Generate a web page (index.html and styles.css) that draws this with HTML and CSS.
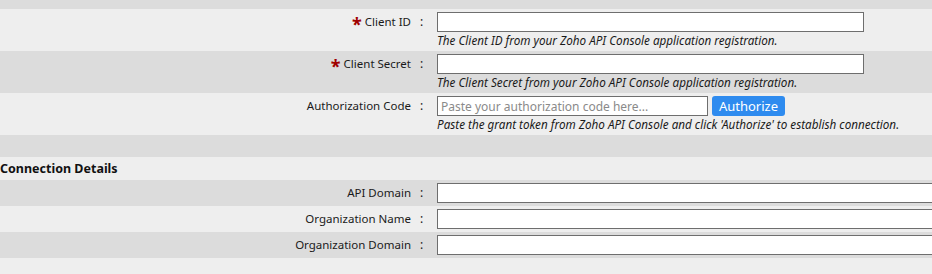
FILE: index.html
```html
<!DOCTYPE html>
<html lang="en">
<head>
    <meta charset="UTF-8">
    <meta name="viewport" content="width=device-width, initial-scale=1.0">
    <title>Zoho API Settings</title>
    <link rel="stylesheet" href="styles.css">
</head>
<body>

<div class="settings">
    <div class="row spacer-top"></div>

    <div class="row">
        <label class="label" for="clientId"><span class="req">*</span> Client ID</label>
        <span class="colon">:</span>
        <div class="field">
            <input type="text" class="input-field" id="clientId">
            <div class="help">The Client ID from your Zoho API Console application registration.</div>
        </div>
    </div>

    <div class="row">
        <label class="label" for="clientSecret"><span class="req">*</span> Client Secret</label>
        <span class="colon">:</span>
        <div class="field">
            <input type="text" class="input-field" id="clientSecret">
            <div class="help">The Client Secret from your Zoho API Console application registration.</div>
        </div>
    </div>

    <div class="row">
        <label class="label" for="authCode">Authorization Code</label>
        <span class="colon">:</span>
        <div class="field">
            <div class="auth-line">
                <input type="text" class="input-field auth-input" id="authCode" placeholder="Paste your authorization code here...">
                <button class="auth-button">Authorize</button>
            </div>
            <div class="help">Paste the grant token from Zoho API Console and click 'Authorize' to establish connection.</div>
        </div>
    </div>

    <div class="row spacer"></div>

    <div class="row section-title">Connection Details</div>

    <div class="row compact">
        <label class="label" for="apiDomain">API Domain</label>
        <span class="colon">:</span>
        <div class="field clip">
            <input type="text" class="input-field wide" id="apiDomain">
        </div>
    </div>

    <div class="row compact">
        <label class="label" for="orgName">Organization Name</label>
        <span class="colon">:</span>
        <div class="field clip">
            <input type="text" class="input-field wide" id="orgName">
        </div>
    </div>

    <div class="row compact">
        <label class="label" for="orgDomain">Organization Domain</label>
        <span class="colon">:</span>
        <div class="field clip">
            <input type="text" class="input-field wide" id="orgDomain">
        </div>
    </div>

    <div class="row spacer-bottom"></div>
</div>

</body>
</html>
```

FILE: styles.css
```css
    body {
        margin: 0;
        padding: 0;
        font-family: 'Segoe UI', 'Noto Sans', sans-serif;
        font-size: 12px;
        color: #1a1a1a;
        background-color: #EEEEEE;
        overflow: hidden;
    }
    .settings {
        display: flex;
        flex-direction: column;
    }
    .row {
        display: grid;
        grid-template-columns: 411px 26px 1fr;
        padding: 3px 0;
        background-color: #EEEEEE;
    }
    .row:nth-child(odd) {
        background-color: #DCDCDC;
    }
    .spacer-top {
        height: 9px;
        padding: 0;
    }
    .spacer {
        height: 22px;
        padding: 0;
    }
    .spacer-bottom {
        height: 16px;
        padding: 0;
    }
    .section-title {
        display: block;
        height: 23px;
        line-height: 23px;
        padding: 0;
        font-weight: bold;
        font-size: 12.5px;
        color: #111;
    }
    .label {
        text-align: right;
        font-size: 11.5px;
        line-height: 20px;
        white-space: nowrap;
    }
    .req {
        color: #A00000;
        font-weight: bold;
        font-size: 18px;
        line-height: 0;
        position: relative;
        top: 5px;
    }
    .colon {
        line-height: 20px;
        padding-left: 9px;
    }
    .field.clip {
        overflow: hidden;
    }
    .input-field {
        display: block;
        width: 427px;
        height: 20px;
        margin: 0;
        padding: 0 3px;
        font-family: 'Segoe UI', 'Noto Sans', sans-serif;
        font-size: 12px;
        background-color: #fff;
        border: 1px solid #6E6E6E;
        box-sizing: border-box;
    }
    .input-field::placeholder {
        color: #8A8A8A;
    }
    .input-field.wide {
        width: 600px;
    }
    .auth-line {
        display: flex;
        gap: 4px;
    }
    .auth-input {
        width: 271px;
    }
    .auth-button {
        width: 73px;
        height: 20px;
        padding: 0;
        background-color: #2E8BEF;
        color: #fff;
        font-family: 'Segoe UI', 'Noto Sans', sans-serif;
        font-size: 13px;
        line-height: 18px;
        border: none;
        border-radius: 3px;
        cursor: pointer;
    }
    .help {
        font-style: italic;
        font-size: 11.7px;
        line-height: 16px;
        white-space: nowrap;
    }
```
